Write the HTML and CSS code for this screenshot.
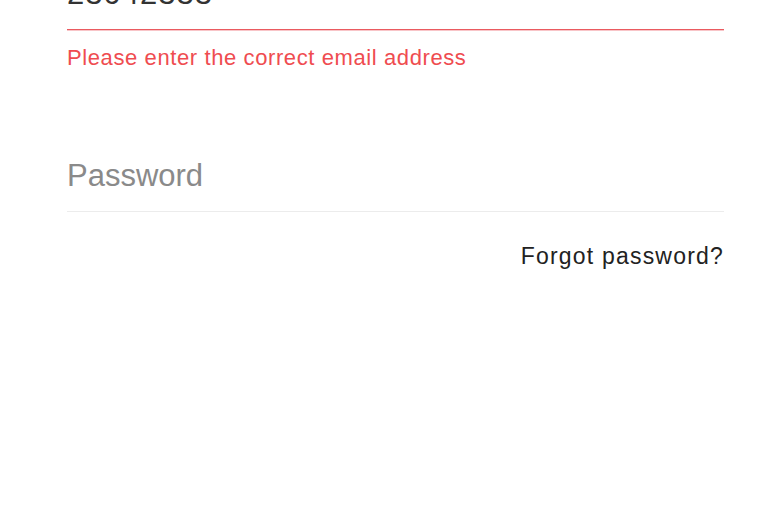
FILE: index.html
```html
<!DOCTYPE html>
<html lang="en">
  <head>
    <meta charset="UTF-8" />
    <meta name="viewport" content="width=device-width, initial-scale=1.0" />
    <title>Sign in</title>
    <link rel="stylesheet" href="styles.css">
  </head>
  <body>
    <form class="login-form" id="loginForm">
      <div class="field field-error">
        <input type="text" id="email" class="email-input" value="23042333" />
      </div>
      <p class="error-text">Please enter the correct email address</p>

      <div class="field">
        <input type="password" id="password" placeholder="Password" />
      </div>

      <div class="form-links">
        <a href="#" class="forgot-link">Forgot password?</a>
      </div>
    </form>
  </body>
</html>
```

FILE: styles.css
```css
body {
  margin: 0;
  padding: 0;
  font-family: "Liberation Sans", Arial, sans-serif;
  background-color: #fff;
}
.login-form {
  margin-top: -41px;
  padding: 0 44px 0 67px;
}
.field {
  display: flex;
  align-items: center;
  height: 70px;
  border-bottom: 1px solid #ececec;
}
.field-error {
  border-bottom-color: #ea5a60;
  box-shadow: 0 1px 0 rgba(234, 90, 96, 0.35);
}
.field input {
  width: 100%;
  border: none;
  outline: none;
  padding: 0;
  background: transparent;
  font-family: "Liberation Sans", Arial, sans-serif;
  font-size: 31px;
  color: #333;
}
.field .email-input {
  letter-spacing: 1px;
}
.field input::placeholder {
  color: #8a8a8a;
}
.error-text {
  margin: 14px 0 69px;
  font-size: 22px;
  line-height: 28px;
  letter-spacing: 0.6px;
  color: #ef4c50;
}
.form-links {
  display: flex;
  justify-content: flex-end;
  margin-top: 29px;
}
.forgot-link {
  font-size: 23px;
  line-height: 30px;
  letter-spacing: 1.2px;
  color: #222;
  text-decoration: none;
}
```
